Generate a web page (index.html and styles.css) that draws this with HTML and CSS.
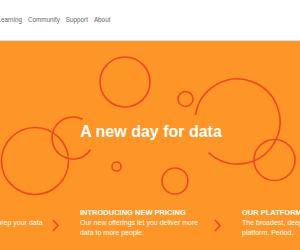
FILE: index.html
```html
<!DOCTYPE html>
<html lang="en">

<head>
    <meta charset="UTF-8">
    <meta name="viewport" content="width=device-width, initial-scale=1.0">
    <title>A new day for data</title>
    <link rel="stylesheet" href="styles.css">
</head>

<body>
    <header class="topbar">
        <nav class="nav">
            <a href="#">Learning</a>
            <a href="#">Community</a>
            <a href="#">Support</a>
            <a href="#">About</a>
        </nav>
    </header>

    <section class="hero">
        <!-- decorative rings -->
        <svg class="rings" width="300" height="209" viewBox="0 0 300 209">
            <circle cx="125" cy="41" r="25" />
            <circle cx="185.5" cy="58" r="7.5" />
            <path d="M195.5 73.9 A42.5 42.5 0 1 1 208.5 111.6" />
            <circle cx="274.5" cy="119" r="20.5" />
            <circle cx="175" cy="140" r="13" />
            <circle cx="35" cy="120" r="33.5" />
            <path d="M90.4 108.7 A21 21 0 1 1 82.5 78.3" />
            <circle cx="116.5" cy="125.5" r="4.5" />
        </svg>

        <h1 class="title">A new day for data</h1>

        <div class="features">
            <div class="feature">
                <div class="text">
                    <h2>TABLEAU PREP</h2>
                    <p>Introducing a new way to prep your data</p>
                </div>
                <svg class="chev" width="7" height="13" viewBox="0 0 7 13">
                    <polyline points="1,1 6,6.5 1,12" />
                </svg>
            </div>
            <div class="feature">
                <div class="text">
                    <h2>INTRODUCING NEW PRICING</h2>
                    <p>Our new offerings let you deliver more data to more people.</p>
                </div>
                <svg class="chev" width="7" height="13" viewBox="0 0 7 13">
                    <polyline points="1,1 6,6.5 1,12" />
                </svg>
            </div>
            <div class="feature">
                <div class="text">
                    <h2>OUR PLATFORM</h2>
                    <p>The broadest, deepest analytics platform. Period.</p>
                </div>
                <svg class="chev" width="7" height="13" viewBox="0 0 7 13">
                    <polyline points="1,1 6,6.5 1,12" />
                </svg>
            </div>
        </div>
    </section>
</body>

</html>
```

FILE: styles.css
```css
* {
    margin: 0;
    padding: 0;
    box-sizing: border-box;
}

body {
    width: 300px;
    height: 250px;
    overflow: hidden;
    font-family: "Liberation Sans", Arial, sans-serif;
    background-color: #fff;
}

.topbar {
    height: 41px;
    border-bottom: 1px solid #e2e2e2;
    display: flex;
    align-items: center;
}

.nav {
    display: flex;
    gap: 6px;
    margin-left: -2.5px;
    margin-top: -1px;
}

.nav a {
    font-size: 6.3px;
    color: #666;
    text-decoration: none;
}

.hero {
    position: relative;
    height: 209px;
    background-color: #fd9527;
    overflow: hidden;
    padding-top: 81px;
}

.rings {
    position: absolute;
    left: 0;
    top: 0;
    fill: none;
    stroke: #f4461d;
    stroke-width: 1.6;
}

.title {
    position: relative;
    font-size: 16px;
    line-height: 20px;
    font-weight: 700;
    color: #fff;
    text-align: center;
    padding-left: 2px;
}

.features {
    position: relative;
    display: flex;
    gap: 21px;
    margin-top: 66px;
    margin-left: -82px;
}

.feature {
    display: flex;
    align-items: flex-start;
    flex: none;
}

.text {
    width: 128px;
    color: #fff;
}

.text h2 {
    font-size: 7.5px;
    line-height: 10px;
    font-weight: 700;
}

.text p {
    font-size: 7px;
    line-height: 10px;
}

.chev {
    margin-left: 6px;
    margin-top: 11px;
    fill: none;
    stroke: #f4461d;
    stroke-width: 1.5;
}
```
